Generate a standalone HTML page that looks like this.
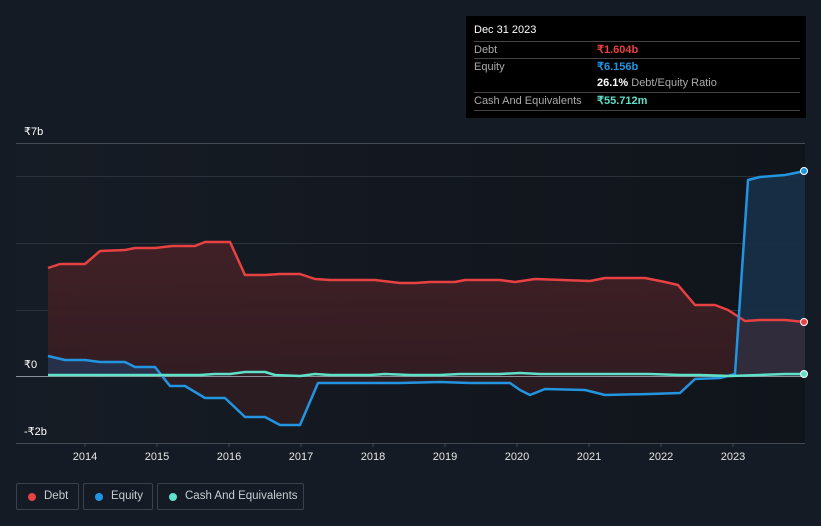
<!DOCTYPE html>
<html style="overflow:hidden"><head><meta charset="utf-8"><style>
body{margin:0;width:821px;height:526px;background:#151b24;font-family:"Liberation Sans",sans-serif;overflow:hidden;position:relative}
.tt{position:absolute;left:466px;top:16px;width:340px;height:102px;background:#000;color:#fff;font-size:11px}
.tt .r{position:absolute;left:8px;width:326px;border-top:1px solid #444;height:17px;line-height:17px;color:#aaa}
.tt .v{position:absolute;left:123px;font-weight:bold}
.lg{position:absolute;top:483px;height:27px;border:1px solid #3a414c;border-radius:2px;color:#c8ccd2;font-size:11.5px;line-height:25px;box-sizing:border-box;white-space:nowrap}
.lg i{position:absolute;left:11px;top:9px;width:8px;height:8px;border-radius:50%}
.lg span{position:absolute;left:27px}
</style></head><body>
<svg width="821" height="526" style="position:absolute;left:0;top:0">
<defs>
<linearGradient id="bg" x1="0" x2="1"><stop offset="0" stop-color="#161c25"/><stop offset="1" stop-color="#10141b"/></linearGradient>
<linearGradient id="dg" x1="0" y1="0" x2="0" y2="1"><stop offset="0" stop-color="#5a2a30"/><stop offset="1" stop-color="#2e1b21"/></linearGradient>
</defs>
<rect x="16" y="143" width="789" height="300" fill="url(#bg)"/>
<g stroke="#2b313a" stroke-width="1">
<line x1="16" x2="805" y1="176.5" y2="176.5"/><line x1="16" x2="805" y1="243.5" y2="243.5"/><line x1="16" x2="805" y1="310.5" y2="310.5"/>
</g>
<line x1="16" x2="805" y1="143.5" y2="143.5" stroke="#444a53"/>
<line x1="16" x2="805" y1="443.5" y2="443.5" stroke="#444a53"/>
<path d="M48,268 L60,264 85,264 100,251 125,250 135,248 155,248 172,246 195,246 205,242 230,242 245,275 265,275 280,274 300,274 315,279 330,280 375,280 400,283 415,283 430,282 455,282 465,280 500,280 515,282 535,279 590,281 605,278 645,278 665,282 678,285 695,305 715,305 728,310 745,321 760,320 785,320 805,322 L805,376 48,376Z" fill="url(#dg)" opacity="0.75"/>
<path d="M48,376 L48,268 60,264 85,264 100,251 125,250 135,248 155,248 172,246 195,246 205,242 230,242 245,275 265,275 280,274 300,274 315,279 330,280 375,280 400,283 415,283 430,282 455,282 465,280 500,280 515,282 535,279 590,281 605,278 645,278 665,282 678,285 695,305 715,305 728,310 735,312 L735,376 Z M155,376 L170,386 185,386 205,398 225,398 245,417 265,417 280,425 300,425 318,383 400,383 440,382 470,383 510,383 520,390 530,395 545,389 585,390 605,395 650,394 680,393 695,379 720,378 735,374 L735,376Z" fill="#3b1e23" opacity="0.6"/>
<path d="M735,374 L748,180 760,177 785,175 805,171 L805,376 735,376Z" fill="#173049" opacity="0.9"/>
<path d="M740,316 L745,321 760,320 785,320 805,322 L805,376 737,376Z" fill="#302c3c"/>
<path d="M48,356 L65,360 85,360 100,362 125,362 135,367 155,367 160,376 48,376Z" fill="#27304a"/>
<line x1="16" x2="805" y1="376.5" y2="376.5" stroke="#8a8f96"/>
<path d="M48,268 L60,264 85,264 100,251 125,250 135,248 155,248 172,246 195,246 205,242 230,242 245,275 265,275 280,274 300,274 315,279 330,280 375,280 400,283 415,283 430,282 455,282 465,280 500,280 515,282 535,279 590,281 605,278 645,278 665,282 678,285 695,305 715,305 728,310 745,321 760,320 785,320 805,322" fill="none" stroke="#e84142" stroke-width="2.5" stroke-linejoin="round"/>
<path d="M48,356 L65,360 85,360 100,362 125,362 135,367 155,367 170,386 185,386 205,398 225,398 245,417 265,417 280,425 300,425 318,383 400,383 440,382 470,383 510,383 520,390 530,395 545,389 585,390 605,395 650,394 680,393 695,379 720,378 735,374 748,180 760,177 785,175 805,171" fill="none" stroke="#2394e0" stroke-width="2.5" stroke-linejoin="round"/>
<path d="M48,375 L200,375 215,374 230,374 245,372 265,372 275,375 300,376 315,374 330,375 370,375 385,374 410,375 440,375 460,374 500,374 520,373 540,374 580,374 620,374 650,374 680,375 700,375 730,376 760,375 785,374 805,374" fill="none" stroke="#5fe0c8" stroke-width="2.5" stroke-linejoin="round"/>
<circle cx="804" cy="171" r="3.5" fill="#2394e0" stroke="#fff" stroke-width="1"/>
<circle cx="804" cy="322" r="3.5" fill="#e84142" stroke="#fff" stroke-width="1"/>
<circle cx="804" cy="374" r="3.5" fill="#5fe0c8" stroke="#fff" stroke-width="1"/>
<g fill="#fff" font-size="11" font-family="Liberation Sans,sans-serif">
<text x="24" y="135">₹7b</text><text x="24" y="368">₹0</text><text x="24" y="435">-₹2b</text>
</g>
<g fill="#e6e6e6" font-size="11" text-anchor="middle" font-family="Liberation Sans,sans-serif">
<text x="85" y="460">2014</text><text x="157" y="460">2015</text><text x="229" y="460">2016</text><text x="301" y="460">2017</text><text x="373" y="460">2018</text><text x="445" y="460">2019</text><text x="517" y="460">2020</text><text x="589" y="460">2021</text><text x="661" y="460">2022</text><text x="733" y="460">2023</text>
</g>
<g stroke="#444a53"><line x1="85" x2="85" y1="443" y2="447"/><line x1="157" x2="157" y1="443" y2="447"/><line x1="229" x2="229" y1="443" y2="447"/><line x1="301" x2="301" y1="443" y2="447"/><line x1="373" x2="373" y1="443" y2="447"/><line x1="445" x2="445" y1="443" y2="447"/><line x1="517" x2="517" y1="443" y2="447"/><line x1="589" x2="589" y1="443" y2="447"/><line x1="661" x2="661" y1="443" y2="447"/><line x1="733" x2="733" y1="443" y2="447"/></g>
</svg>
<div class="tt">
<div style="position:absolute;left:8px;top:8px;font-size:11px">Dec 31 2023</div>
<div class="r" style="top:25px">Debt<span class="v" style="color:#e84142">₹1.604b</span></div>
<div class="r" style="top:42px">Equity<span class="v" style="color:#2394e0">₹6.156b</span></div>
<div class="r" style="top:59px;border-top:none"><span class="v" style="color:#fff">26.1% <span style="font-weight:normal;color:#aaa">Debt/Equity Ratio</span></span></div>
<div class="r" style="top:76px">Cash And Equivalents<span class="v" style="color:#5fe0c8">₹55.712m</span></div>
<div class="r" style="top:94px;height:0"></div>
</div>
<div class="lg" style="left:16px;width:63px"><i style="background:#e84142"></i><span>Debt</span></div>
<div class="lg" style="left:83px;width:70px"><i style="background:#2394e0"></i><span>Equity</span></div>
<div class="lg" style="left:157px;width:147px"><i style="background:#5fe0c8"></i><span>Cash And Equivalents</span></div>
</body></html>
